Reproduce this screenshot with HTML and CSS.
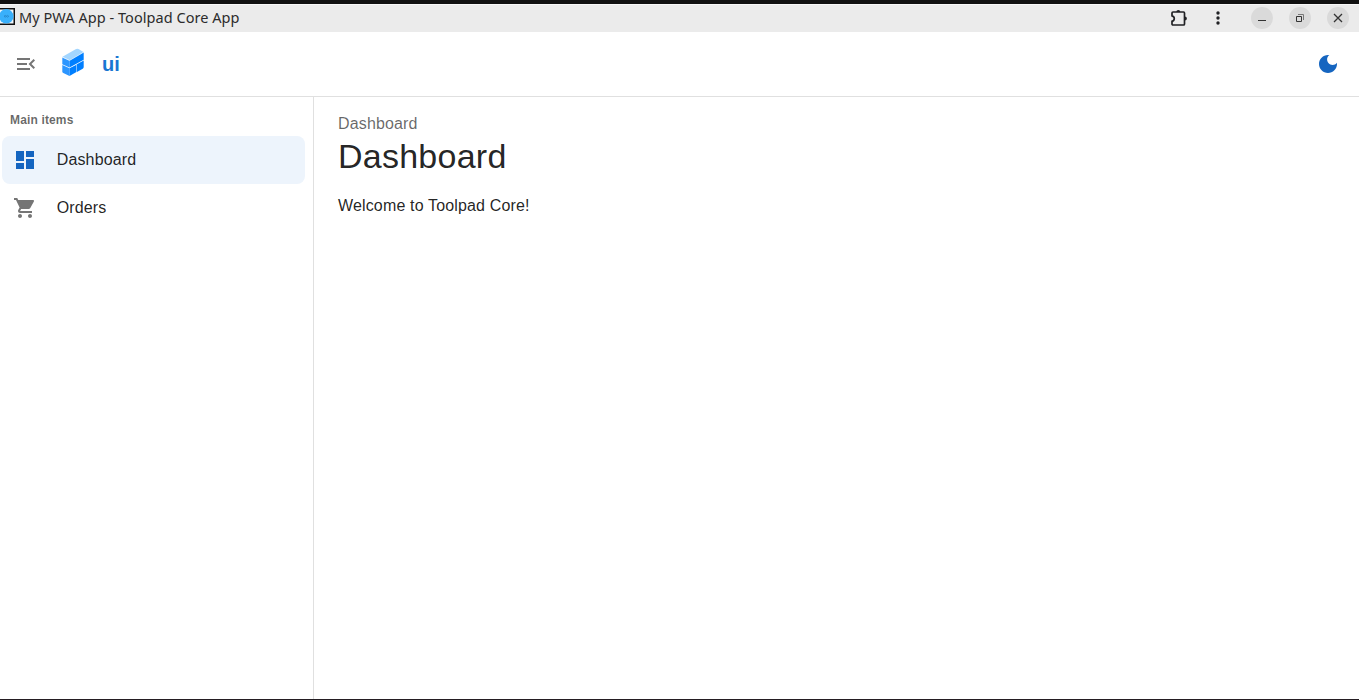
FILE: index.html
```html
<!DOCTYPE html>
<html lang="en">
<head>
<meta charset="utf-8">
<title>My PWA App - Toolpad Core App</title>
<link rel="stylesheet" href="styles.css">
</head>
<body>
<div class="window">
  <div class="titlebar">
    <svg class="favicon" width="15" height="17" viewBox="0 0 15 17"><path d="M0 0H15V17H0z" fill="#111"/><path d="M0 1.500H13.500V15.500H0z" fill="#eef5fa"/><circle cx="6.300" cy="8.300" r="7.200" fill="#39b0fb"/><path d="M4 8.300q1.200-1.800 2.400 0t2.400 0M4 8.300q1.200 1.800 2.400 0t2.400 0" fill="none" stroke="#2484c7" stroke-width=".8"/></svg>
    <span class="app-title">My PWA App - Toolpad Core App</span>
    <div class="controls">
      <svg class="puzzle" width="18" height="18" viewBox="0 0 18 18"><path d="M3 3H13.500Q14.500 3 14.500 4V15Q14.500 16 13.500 16H3Q2 16 2 15V12.300A2.800 2.800 0 0 0 2 6.800V4Q2 3 3 3Z" fill="none" stroke="#202124" stroke-width="1.700"/><path d="M6.300 3a2 2.100 0 0 1 4 0zM14.800 7.400a2.100 2.100 0 0 1 0 4.200z" fill="#202124"/></svg>
      <svg class="dots" width="6" height="16" viewBox="0 0 6 16" fill="#202124"><circle cx="3" cy="3" r="1.700"/><circle cx="3" cy="8" r="1.700"/><circle cx="3" cy="13" r="1.700"/></svg>
      <span class="wbtn"><svg width="22" height="22" viewBox="0 0 22 22"><path d="M7 13.500h8" stroke="#333" stroke-width="1"/></svg></span>
      <span class="wbtn"><svg width="22" height="22" viewBox="0 0 22 22" fill="none"><path d="M9 7.500h5.500V13" stroke="#777"/><path d="M7.500 9.500h5v5h-5z" stroke="#333"/></svg></span>
      <span class="wbtn"><svg width="22" height="22" viewBox="0 0 22 22"><path d="M7 7l8 8M15 7l-8 8" stroke="#333" stroke-width="1.300"/></svg></span>
    </div>
  </div>
  <header class="header">
    <svg class="menu" width="24" height="24" viewBox="0 0 24 24" fill="#757575"><path d="M3 18h13v-2H3v2zM3 13h10v-2H3v2zm0-7v2h13V6H3zm18 9.590L17.420 12 21 8.410 19.590 7l-5 5 5 5L21 15.590z"/></svg>
    <svg class="logo" width="26" height="32" viewBox="60 46 26 32">
      <path d="M62.500 56.800L75.600 49.200Q77 48.400 78.500 49.100L83.500 51.900L69.700 60.200Z" fill="#a3d6ff"/>
      <path d="M62.300 57.400L69.500 60.700V67.400L62.300 64.200Z" fill="#2d96ff"/>
      <path d="M69.500 60.700L83.700 52.500V59.800L69.500 67.400Z" fill="#007fff"/>
      <path d="M62.300 65L69.500 68.300V75.900L63.300 73Q62.300 72.500 62.300 71.500Z" fill="#2d96ff"/>
      <path d="M69.500 68.300L76 64.900V72.300L69.500 75.900Z" fill="#007fff"/>
      <path d="M76.500 64.600L83.700 60.600V67Q83.700 68.200 82.700 68.800L76.500 72.200Z" fill="#007fff"/>
      <path d="M62.300 57.100L69.500 60.500L83.700 52.200" fill="none" stroke="#cce8ff" stroke-width=".3"/>
    </svg>
    <span class="brand">ui</span>
    <svg class="moon" width="24" height="24" viewBox="0 0 24 24" fill="#1565c0"><path d="M12 3c-4.970 0-9 4.030-9 9s4.030 9 9 9 9-4.030 9-9c0-.460-.040-.920-.100-1.360-.980 1.370-2.580 2.260-4.400 2.260-2.980 0-5.400-2.420-5.400-5.400 0-1.810.890-3.420 2.260-4.400-.440-.060-.900-.100-1.360-.100z"/></svg>
  </header>
  <div class="body">
    <nav class="sidebar">
      <div class="subheader">Main items</div>
      <div class="item selected">
        <svg width="24" height="24" viewBox="0 0 24 24" fill="#1565c0"><path d="M3 13h8V3H3v10zm0 8h8v-6H3v6zm10 0h8V11h-8v10zm0-18v6h8V3h-8z"/></svg>
        <span>Dashboard</span>
      </div>
      <div class="item">
        <svg width="24" height="24" viewBox="0 0 24 24" fill="#757575"><path d="M7 18c-1.100 0-1.990.900-1.990 2S5.900 22 7 22s2-.900 2-2-.900-2-2-2zM1 2v2h2l3.600 7.590-1.350 2.450c-.160.280-.250.610-.250.960 0 1.100.900 2 2 2h12v-2H7.420c-.140 0-.250-.110-.250-.250l.030-.120.900-1.630h7.450c.750 0 1.410-.410 1.750-1.030l3.580-6.490c.080-.140.120-.310.120-.480 0-.550-.450-1-1-1H5.210l-.940-2H1zm16 16c-1.100 0-1.990.900-1.990 2s.890 2 1.990 2 2-.900 2-2-.900-2-2-2z"/></svg>
        <span>Orders</span>
      </div>
    </nav>
    <main class="content">
      <div class="crumb">Dashboard</div>
      <h1 class="heading">Dashboard</h1>
      <p class="text">Welcome to Toolpad Core!</p>
    </main>
  </div>
</div>
</body>
</html>
```
FILE: styles.css
```css
* { box-sizing: border-box; }
body {
  margin: 0;
  font: 16px/24px "Liberation Sans", Arial, sans-serif;
  letter-spacing: 0.15px;
  color: rgba(0, 0, 0, 0.87);
  background: #fff;
}
svg { display: block; flex: none; }
.window {
  display: flex;
  flex-direction: column;
  height: 700px;
  overflow: hidden;
  border-top: 4px solid #111;
  border-bottom: 1px solid #241d22;
}
.titlebar {
  display: flex;
  align-items: center;
  flex: none;
  height: 28px;
  padding-bottom: 1px;
  background: #ebebeb;
  border-top: 1px solid #f8f8f8;
}
.favicon { margin-top: -3px; }
.app-title {
  margin: -2px 0 0 4px;
  font: 14.5px/20px "Noto Sans", sans-serif;
  letter-spacing: 0.05px;
  color: #2b2b2b;
  white-space: nowrap;
}
.controls {
  display: flex;
  align-items: center;
  margin-left: auto;
  padding-right: 10px;
}
.puzzle { margin: -1px 27px 0 0; }
.dots { margin-right: 30px; }
.wbtn {
  width: 22px;
  height: 22px;
  border-radius: 50%;
  background: #dadada;
}
.wbtn + .wbtn { margin-left: 16px; }
.header {
  display: flex;
  align-items: center;
  flex: none;
  height: 65px;
  padding: 0 19px 0 14px;
  border-bottom: 1px solid #e0e0e0;
}
.logo { margin: -4px 0 0 22px; }
.brand {
  margin-left: 16px;
  font-size: 20px;
  font-weight: 700;
  color: #1976d2;
}
.moon { margin-left: auto; }
.body { display: flex; flex: 1; }
.sidebar {
  width: 314px;
  flex: none;
  padding: 3px 8px 0 2px;
  border-right: 1px solid #e0e0e0;
}
.subheader {
  height: 36px;
  padding: 8px 8px 0;
  font-size: 12px;
  font-weight: 700;
  color: rgba(0, 0, 0, 0.6);
}
.item {
  display: flex;
  align-items: center;
  height: 48px;
  padding-left: 11px;
  border-radius: 8px;
}
.item span { margin-left: 19.7px; }
.selected { background: #edf4fc; }
.content { padding: 15px 24px; }
.crumb { color: rgba(0, 0, 0, 0.6); }
.heading {
  margin: 0;
  font-size: 34px;
  font-weight: 400;
  line-height: 40px;
  letter-spacing: 0.25px;
}
.text { margin: 18px 0 0; }
```
